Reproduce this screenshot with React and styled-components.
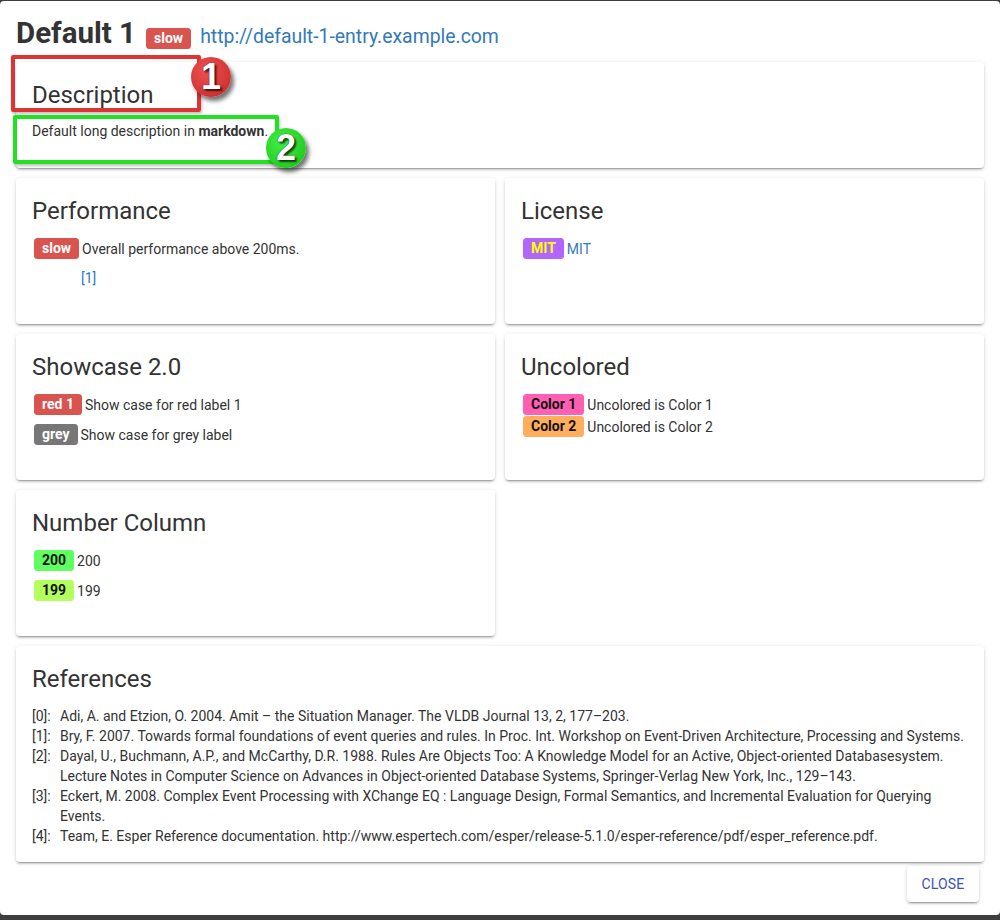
import React from "react";
import styled, { createGlobalStyle } from "styled-components";

const GlobalStyle = createGlobalStyle`
  html, body {
    margin: 0;
    padding: 0;
    height: 920px;
    overflow: hidden;
    background: #3d3d3d;
    font-family: Roboto, "Noto Sans", "Liberation Sans", sans-serif;
    color: #333;
  }
`;

const Modal = styled.div`
  position: relative;
  margin-top: 1px;
  height: 914px;
  box-sizing: border-box;
  background: #fff;
  border-radius: 4px;
  padding: 14px 16px 0;
  display: flex;
  flex-direction: column;
`;

const Header = styled.div`
  display: flex;
  align-items: baseline;
  height: 36px;
  margin-bottom: 11px;
`;

const Title = styled.h1`
  margin: 0 10px 0 0;
  font-size: 29.5px;
  line-height: 36px;
  font-weight: 700;
  color: #333;
`;

const HeaderLink = styled.a`
  margin-left: 9px;
  font-size: 19.4px;
  color: #337ab7;
  text-decoration: none;
`;

const Grid = styled.div`
  display: grid;
  grid-template-columns: 1fr 1fr;
  gap: 10px;
`;

const Card = styled.section`
  grid-column: ${(p) => (p.$wide ? "1 / -1" : "auto")};
  background: #fff;
  border-radius: 4px;
  padding: 16px;
  box-shadow: 0 3px 1px -2px rgba(0, 0, 0, 0.2), 0 2px 2px 0 rgba(0, 0, 0, 0.14),
    0 1px 5px 0 rgba(0, 0, 0, 0.12);
`;

const CardTitle = styled.h2`
  margin: 0;
  font-size: 24px;
  line-height: 34px;
  font-weight: 400;
  color: #333;
`;

const Text = styled.p`
  margin: 9px 0 11px;
  font-size: 14px;
  line-height: 20px;
`;

const EntryList = styled.div`
  margin-top: 10px;
  padding-bottom: 10px;
  font-size: 14px;
  display: flex;
  flex-direction: column;
`;

const Entry = styled.div`
  display: flex;
  align-items: center;
  gap: 3px;
  min-height: 21px;
  margin-bottom: ${(p) => (p.$tight ? "1px" : "9px")};
`;

const RefLine = styled.div`
  padding-left: 49px;
  height: 21px;
  line-height: 21px;
  margin-bottom: 9px;
`;

const Label = styled.span`
  display: inline-block;
  margin-left: ${(p) => (p.$flush ? "0" : "2px")};
  padding: 2px ${(p) => p.$pad || 8}px 3px;
  font-size: 14px;
  line-height: 16px;
  font-weight: 700;
  border-radius: 3.5px;
  background: ${(p) => p.$bg};
  color: ${(p) => p.$fg || "#fff"};
`;

const Link = styled.a`
  color: #337ab7;
  text-decoration: none;
`;

const RefList = styled.div`
  margin-top: 10px;
  display: grid;
  grid-template-columns: 28px 1fr;
  font-size: 14px;
  line-height: 20px;
`;

const Actions = styled.div`
  display: flex;
  justify-content: flex-end;
  padding: 4px 5px 0;
`;

const Button = styled.button`
  height: 36px;
  min-width: 72px;
  padding: 6px 14px;
  border: none;
  border-radius: 4px;
  background: #fff;
  color: #3f51b5;
  font-family: Roboto, sans-serif;
  font-size: 14px;
  font-weight: 400;
  letter-spacing: 0.01em;
  text-transform: uppercase;
  box-shadow: 0 3px 1px -2px rgba(0, 0, 0, 0.2), 0 2px 2px 0 rgba(0, 0, 0, 0.14),
    0 1px 5px 0 rgba(0, 0, 0, 0.12);
`;

const Frame = styled.div`
  position: absolute;
  left: ${(p) => p.$x}px;
  top: ${(p) => p.$y}px;
  width: ${(p) => p.$w}px;
  height: ${(p) => p.$h}px;
  box-sizing: border-box;
  border: 4px solid ${(p) => p.$color};
  border-radius: 2px;
  box-shadow: 1px 2px 3px rgba(0, 0, 0, 0.25);
  pointer-events: none;
`;

const Marker = styled.div`
  position: absolute;
  left: ${(p) => p.$x}px;
  top: ${(p) => p.$y}px;
  width: 40px;
  height: 40px;
  border-radius: 50%;
  background: radial-gradient(circle at 40% 35%, ${(p) => p.$light}, ${(p) => p.$dark});
  box-shadow: 3px 4px 4px rgba(0, 0, 0, 0.55);
  display: flex;
  align-items: center;
  justify-content: center;
  color: #fff;
  font-family: "Liberation Sans", Arial, sans-serif;
  font-weight: 700;
  font-size: 36px;
  line-height: 1;
  text-shadow: 2px 2px 2px rgba(0, 0, 0, 0.7), 0 0 1px #000;
`;

const references = [
  "Adi, A. and Etzion, O. 2004. Amit – the Situation Manager. The VLDB Journal 13, 2, 177–203.",
  "Bry, F. 2007. Towards formal foundations of event queries and rules. In Proc. Int. Workshop on Event-Driven Architecture, Processing and Systems.",
  "Dayal, U., Buchmann, A.P., and McCarthy, D.R. 1988. Rules Are Objects Too: A Knowledge Model for an Active, Object-oriented Databasesystem. Lecture Notes in Computer Science on Advances in Object-oriented Database Systems, Springer-Verlag New York, Inc., 129–143.",
  "Eckert, M. 2008. Complex Event Processing with XChange EQ : Language Design, Formal Semantics, and Incremental Evaluation for Querying Events.",
  "Team, E. Esper Reference documentation. http://www.espertech.com/esper/release-5.1.0/esper-reference/pdf/esper_reference.pdf.",
];

const App = () => {
  return (
    <>
      <GlobalStyle />
      <Modal>
        <Header>
          <Title>Default 1</Title>
          <Label $bg="#d9534f" $flush>slow</Label>
          <HeaderLink href="#">http://default-1-entry.example.com</HeaderLink>
        </Header>

        <Grid>
          <Card $wide>
            <CardTitle>Description</CardTitle>
            <Text>
              Default long description in <b>markdown</b>.
            </Text>
          </Card>

          <Card>
            <CardTitle>Performance</CardTitle>
            <EntryList>
              <Entry>
                <Label $bg="#d9534f">slow</Label>
                <span>Overall performance above 200ms.</span>
              </Entry>
              <RefLine>
                <Link href="#">[1]</Link>
              </RefLine>
            </EntryList>
          </Card>

          <Card>
            <CardTitle>License</CardTitle>
            <EntryList>
              <Entry>
                <Label $bg="#b264fc" $fg="#ffff00">MIT</Label>
                <Link href="#">MIT</Link>
              </Entry>
            </EntryList>
          </Card>

          <Card>
            <CardTitle>Showcase 2.0</CardTitle>
            <EntryList>
              <Entry>
                <Label $bg="#d9534f">red 1</Label>
                <span>Show case for red label 1</span>
              </Entry>
              <Entry>
                <Label $bg="#777777">grey</Label>
                <span>Show case for grey label</span>
              </Entry>
            </EntryList>
          </Card>

          <Card>
            <CardTitle>Uncolored</CardTitle>
            <EntryList>
              <Entry $tight>
                <Label $bg="#ff5fb2" $fg="#111">Color 1</Label>
                <span>Uncolored is Color 1</span>
              </Entry>
              <Entry $tight>
                <Label $bg="#ffae5e" $fg="#111">Color 2</Label>
                <span>Uncolored is Color 2</span>
              </Entry>
            </EntryList>
          </Card>

          <Card>
            <CardTitle>Number Column</CardTitle>
            <EntryList>
              <Entry>
                <Label $bg="#5eff5e" $fg="#111">200</Label>
                <span>200</span>
              </Entry>
              <Entry>
                <Label $bg="#b2ff5e" $fg="#111">199</Label>
                <span>199</span>
              </Entry>
            </EntryList>
          </Card>

          <Card $wide>
            <CardTitle>References</CardTitle>
            <RefList>
              {references.map((r, i) => (
                <React.Fragment key={i}>
                  <span>[{i}]:</span>
                  <span>{r}</span>
                </React.Fragment>
              ))}
            </RefList>
          </Card>
        </Grid>

        <Actions>
          <Button>Close</Button>
        </Actions>

        <Frame $x={11} $y={54} $w={190} $h={57} $color="#dd3434" />
        <Marker $x={191} $y={56} $light="#f05050" $dark="#c42626">1</Marker>
        <Frame $x={13} $y={114} $w={266} $h={49} $color="#22e022" />
        <Marker $x={266} $y={127} $light="#44f044" $dark="#16c016">2</Marker>
      </Modal>
    </>
  );
};

export default App;
